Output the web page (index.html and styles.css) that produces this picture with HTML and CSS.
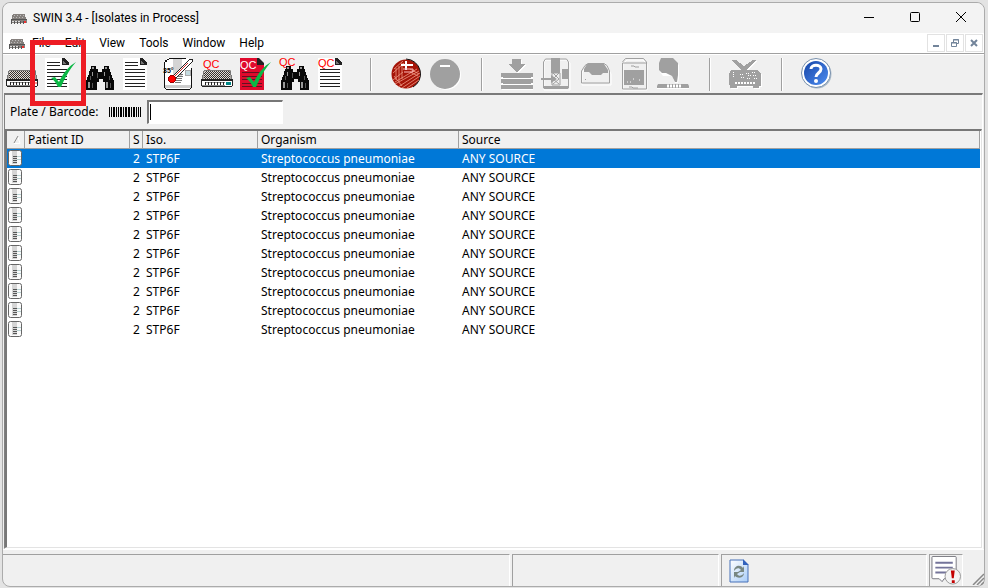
FILE: index.html
```html
<!DOCTYPE html>
<html lang="en">
<head>
<meta charset="utf-8">
<title>SWIN 3.4 - [Isolates in Process]</title>
<link rel="stylesheet" href="styles.css">
</head>
<body>
<svg class="defs" aria-hidden="true">
  <defs>
    <pattern id="mesh" width="4" height="2" patternUnits="userSpaceOnUse"><rect width="4" height="2" fill="#e0dcd8"/><path d="M0 0h1v1H0zM2 0h1v1H2zM1 1h1v1H1zM3 1h1v1H3z" fill="#33302e"/></pattern>
    <linearGradient id="blue" x1="0" y1="0" x2="1" y2="1"><stop offset="0" stop-color="#1746a8"/><stop offset="1" stop-color="#4d8df0"/></linearGradient>
    <linearGradient id="sheet" x1="0" y1="0" x2="1" y2="1"><stop offset="0" stop-color="#fff"/><stop offset="1" stop-color="#a9cdf8"/></linearGradient>
  </defs>
  <symbol id="plate" viewBox="0 0 32 32" shape-rendering="crispEdges">
    <path d="M3 12h26l1 1v8h2v6l-1 2H1l-1-2v-6h2v-8z" fill="#a8a4a0"/>
    <path d="M4 13h24v1h1v7H3v-7h1z" fill="url(#mesh)"/>
    <path d="M3 12h26v1H3zM2 13h1v4H2zM1 17h1v4H1zM29 13h1v4h-1zM30 17h1v4h-1z" fill="#777"/>
    <path d="M0 21h32v2H0zM0 23h1v5H0zM31 23h1v5h-1zM1 28h30v1H1z" fill="#222"/>
    <path d="M1 23h30v5H1z" fill="#fff"/>
    <path d="M5 24h19v1H5zM1 27h23v1H1z" fill="#888"/>
    <path d="M4 24h1v3H4zM7 24h1v3H7zM10 24h1v3h-1zM13 24h1v3h-1zM16 24h1v3h-1zM19 24h1v3h-1zM22 24h1v3h-1z" fill="#222"/>
  </symbol>
  <symbol id="miniplate" viewBox="0 0 16 10" shape-rendering="crispEdges">
    <path d="M2 0h12l1 5h1v4H0V5h1V1z" fill="#85807d"/>
    <path d="M3 1h1v1H3zM6 1h1v1H6zM9 1h1v1H9zM12 1h1v1h-1zM2 3h1v1H2zM5 3h1v1H5zM8 3h1v1H8zM11 3h1v1h-1z" fill="#bbb"/>
    <path d="M0 5h16v1H0zM0 6h1v4H0zM3 7h1v3H3zM6 7h1v3H6zM9 7h1v3H9zM12 7h1v3h-1z" fill="#555"/>
    <path d="M1 7h2v1H1zM4 7h2v1H4zM7 7h2v1H7z" fill="#ddd"/><path d="M13 7h2v2h-2z" fill="#e33"/>
  </symbol>
  <symbol id="doc" viewBox="0 0 32 32" shape-rendering="crispEdges">
    <path d="M0 0h17l7 6v26H0z" fill="#fff"/>
    <path d="M17 0h2l5 5v2h-7z" fill="#222"/><path d="M18 3l4 3h-4z" fill="#777"/>
    <path d="M2 4h13v1H2zM2 7h13v1H2zM2 11h20v1H2zM2 14h20v1H2zM2 18h20v1H2zM2 21h20v1H2zM2 25h20v1H2zM2 28h20v1H2z" fill="#222"/>
  </symbol>
  <symbol id="tick" viewBox="0 0 32 32"><path d="M6 20l4-1 4 5C18 15 24 8 31 4 24 12 20 20 16 29h-3C11 25 9 22 6 20z" fill="#0bb845"/></symbol>
  <symbol id="bino" viewBox="0 0 32 32" shape-rendering="crispEdges">
    <path d="M7 8h5v3h2v3h4v-3h2V8h5v3h1l1 5 3 7v9h-9v-8h-2v-3h-4v3h-2v8H2v-9l3-7 1-5h1z" fill="#080808"/>
    <path d="M8 9h2v2H8zM21 9h2v2h-2zM8 14h1v4H8zM20 14h1v4h-1zM4 24h2v6H4zM22 24h2v6h-2z" fill="#999"/>
    <path d="M6 18h1v4H6zM13 15h1v5h-1zM25 18h1v4h-1zM26 25h1v5h-1zM8 25h1v5H8z" fill="#555"/>
  </symbol>
  <symbol id="thermo" viewBox="0 0 32 32" shape-rendering="crispEdges">
    <path d="M6 0h20l3 3v27l-1 2H4l-2-2V4l2-3z" fill="#fff"/>
    <path d="M7 0h17v1H7zM5 1h2v1H5zM3 2h2v2H3zM2 4h1v26H2zM29 10h1v20h-1zM4 31h24v1H4zM3 30h1v1H3zM28 30h1v1h-1z" fill="#111"/>
    <path d="M11 1h9v18h-9z" fill="#d4d4d4"/><path d="M3 27h26v3H3z" fill="#ccc"/>
    <path d="M15 16h6v1h-6zM15 18h6v1h-6zM13 20h7v1h-7zM13 22h7v1h-7zM13 24h6v1h-6z" fill="#777"/>
    <rect x="23" y="12" width="5" height="5" fill="#c4dbe0" stroke="#aaa"/>
    <path d="M11 18L28 1h2v3L14 20z" fill="#fff" stroke="#222"/><path d="M11 20L26 5" stroke="#c22"/>
    <circle cx="10" cy="21" r="3.500" fill="#f00" stroke="#900"/>
    <text x="1" y="15" class="deg">35°</text>
  </symbol>
  <symbol id="rowdoc" viewBox="0 0 14 16">
    <rect x=".5" y=".5" width="13" height="15" rx="2" fill="#fafafa" stroke="#666"/>
    <path d="M4 1h5v13H4z" fill="#d5d5d5"/><path d="M5 6h4v1H5zM5 8h4v1H5zM5 10h4v1H5zM5 12h4v1H5z" fill="#555"/><path d="M9 6h4v1H9zM9 9h4v1H9z" fill="#b9d3d3"/>
  </symbol>
</svg>

<div class="window">
  <header class="titlebar">
    <svg class="app-icon" viewBox="0 0 16 10"><use href="#miniplate"/></svg>
    <h1>SWIN 3.4 - [Isolates in Process]</h1>
    <div class="caption">
      <button aria-label="Minimize"><svg viewBox="0 0 12 12"><path d="M1 5.500h10" stroke="#000"/></svg></button>
      <button aria-label="Maximize"><svg viewBox="0 0 12 12"><rect x="1.500" y=".5" width="9" height="9" rx="1" fill="none" stroke="#000"/></svg></button>
      <button aria-label="Close"><svg viewBox="0 0 12 12"><path d="M1 0l10 10M11 0L1 10" stroke="#000"/></svg></button>
    </div>
  </header>

  <nav class="menubar">
    <svg class="app-icon" viewBox="0 0 16 10"><use href="#miniplate"/></svg>
    <button>File</button><button>Edit</button><button>View</button><button>Tools</button><button>Window</button><button>Help</button>
    <div class="mdi-buttons">
      <button aria-label="Minimize document"><svg viewBox="0 0 10 10"><path d="M2 7h6v2H2z" fill="#72849a"/></svg></button>
      <button aria-label="Restore document"><svg viewBox="0 0 10 10"><path d="M3.500 4V1.500h5v4H7M3 2h6M1.500 4.500h5v4h-5zM1 5h6" fill="none" stroke="#72849a"/></svg></button>
      <button aria-label="Close document"><svg viewBox="0 0 10 10"><path d="M2 2l6 6M8 2L2 8" stroke="#72849a" stroke-width="2"/></svg></button>
    </div>
  </nav>

  <div class="toolbar" role="toolbar">
    <button aria-label="Plates"><svg viewBox="0 0 32 32"><use href="#plate"/><path d="M24 24h6v3h-6z" fill="#fff"/><path d="M26 24h5v2h-5z" fill="#f99"/></svg></button>
    <button aria-label="Isolates in process"><svg viewBox="0 0 32 32"><use href="#doc"/><use href="#tick"/></svg></button>
    <button aria-label="Find isolate"><svg viewBox="0 0 32 32"><use href="#bino"/></svg></button>
    <button aria-label="Report"><svg viewBox="0 0 32 32"><use href="#doc"/></svg></button>
    <button aria-label="Incubator"><svg viewBox="0 0 32 32"><use href="#thermo"/></svg></button>
    <button aria-label="QC plates"><svg viewBox="0 0 32 32"><use href="#plate"/><path d="M25 24h5v3h-5z" fill="#088"/><text x="2" y="10" class="qc">QC</text></svg></button>
    <button aria-label="QC in process"><svg viewBox="0 0 32 32"><path d="M0 0h17l7 6v26H0z" fill="#e00a2d"/><path d="M17 0h2l5 5v2h-7z" fill="#222"/><path d="M2 14.500h20M2 18.500h20M2 21.500h20M2 25.500h20M2 28.500h20" stroke="#641020"/><text x="0" y="11" class="qc qc-light">QC</text><use href="#tick"/></svg></button>
    <button aria-label="Find QC"><svg viewBox="0 0 32 32"><use href="#bino"/><text x="0" y="8" class="qc">QC</text></svg></button>
    <button aria-label="QC report"><svg viewBox="0 0 32 32"><use href="#doc"/><path d="M0 0h16v10H0z" fill="#fff"/><text x="0" y="9" class="qc">QC</text></svg></button>
    <span class="sep"></span>
    <button aria-label="Add organism"><svg viewBox="0 0 32 32"><circle cx="16" cy="16" r="14.500" fill="#a51408"/><path d="M16 1a15 15 0 0 1 7 28" fill="none" stroke="#111" stroke-width="1"/><path d="M4 11l9-8M3 15l11-10M9 8v15M6 10v12M12 5v16M3 22l10-8M5 26l24-13M8 29l22-14M12 30l18-12M5 24l22-13M17 30l12-8M20 11l9 5M20 14l8 4M4 18l8 10" stroke="#f09a86" stroke-width=".8"/><path d="M16 3v9M11 7h12" stroke="#fff" stroke-width="2"/><path d="M13 11h10v3h-9" fill="none" stroke="#fbb"/></svg></button>
    <button aria-label="Remove organism" disabled><svg viewBox="0 0 32 32"><circle cx="17" cy="17" r="15" fill="#fff"/><circle cx="16" cy="16" r="15" fill="#a0a0a0"/><path d="M11 7h10v2H11z" fill="#fff"/></svg></button>
    <span class="sep"></span>
    <button aria-label="Load plates" disabled><svg viewBox="0 0 32 32" shape-rendering="crispEdges"><path d="M12 1h8v5h5l-9 8-9-8h5zM1 15h30v4h-1v2H2v-2H0v-4zM1 21h30v4h-1v2H2v-2H0v-4zM1 27h30v4H0v-4z" fill="#fff" transform="translate(1 1)"/><path d="M11 1h9v5h5l-9 8-9-8h4zM0 15h32v4h-2v1H2v-1H0zM0 21h32v4h-2v1H2v-1H0zM0 27h32v4H0z" fill="#a0a0a0"/><path d="M0 20h32v1H0zM0 26h32v1H0z" fill="#fff"/></svg></button>
    <button aria-label="Inoculator" disabled><svg viewBox="-1 0 32 32"><path d="M5 2h21l3 3v27H3V4z" fill="none" stroke="#fff"/><path d="M4.500 1h21l2 3v26h-25V4z" fill="none" stroke="#a0a0a0"/><path d="M10 0h9v15h-9zM21 11h7v10h-7zM0 20h10v-3l6 4-6 4v-3H0zM3 28h24v3H3z" fill="#a0a0a0"/><path d="M11 15h8v12h-8zM12 15l6 6M18 15l-6 6 6 5M18 21l-6 5" fill="none" stroke="#a0a0a0"/></svg></button>
    <button aria-label="Reader" disabled><svg viewBox="-1 0 32 32"><path d="M2 15L8 6h18l5 10v11H2z" fill="none" stroke="#fff"/><path d="M1.500 13L5 7.500l3-2h16l3 2 2.500 5.500v12h-28z" fill="none" stroke="#a0a0a0"/><path d="M7 6h17l4 6v3h-5l-2 2h-9l-3-3H4v-3z" fill="#a0a0a0"/><path d="M5 21.500h1" stroke="#a0a0a0"/></svg></button>
    <button aria-label="Incubator unit" disabled><svg viewBox="-1 0 32 32"><path d="M4 6l4-4h16l4 4v26H4z" fill="none" stroke="#fff"/><path d="M3.500 4l3-3.500h18l3 3.500v27h-24V5h24" fill="none" stroke="#a0a0a0"/><path d="M5 12h20v15H5z" fill="#a0a0a0"/><path d="M12 8h3l1 1h4M10 29h3l1 1h5" stroke="#a0a0a0" fill="none"/><path d="M8 24h1M11 24h1M14 21h1M20 22h1" stroke="#fff"/></svg></button>
    <button aria-label="Unload plates" disabled><svg viewBox="0 0 32 32"><path d="M5 1h9l8 6v13l-1 5h-3l-3-7H6l-3-4z" fill="#fff"/><path d="M4 0h12l5 5v12l-1 7h-2l-3-6-6-3H5l-3-3V5z" fill="#a0a0a0"/><path d="M1 26h30l1 2v2H0v-2z" fill="#a0a0a0"/><path d="M10 28h14" stroke="#fff" stroke-width="3" stroke-dasharray="2 1"/><path d="M0 30.500h32" stroke="#fff"/></svg></button>
    <span class="sep"></span>
    <button aria-label="Instrument" disabled><svg viewBox="0 0 32 32" shape-rendering="crispEdges"><path d="M3 2h4l8 6 9-6h3l-9 10h11l3 4v12h-2v2h-6v-2H8v2H1v-3H0V16l2-4h10z" fill="#fff" transform="translate(1 1)"/><path d="M2 2h5l8 6 9-6h3l-9 10h11l3 4v12h-2v2h-6v-2H8v2H1v-3H0V16l2-4h10z" fill="#a0a0a0"/><path d="M4 14v6M11 16h3M12 19h3M17 15h3M19 17h3M23 14h4M24 17h4M18 20h4M25 20h3" stroke="#fff" stroke-dasharray="1 1"/><path d="M6 25h20" stroke="#fff" stroke-width="2" stroke-dasharray="2 1"/></svg></button>
    <span class="sep"></span>
    <button aria-label="Help"><svg viewBox="0 0 32 32"><circle cx="16" cy="16" r="14.500" fill="#a9b9c8"/><circle cx="15" cy="15" r="14.500" fill="#fff" stroke="#7890ac"/><circle cx="15" cy="15" r="12" fill="url(#blue)"/><path d="M10 11c0-5 10-5 10 0 0 4-5 4-5 8" fill="none" stroke="#fff" stroke-width="3"/><circle cx="15" cy="23" r="2" fill="#fff"/></svg></button>
  </div>

  <main class="document">
    <form class="scan">
      <label for="barcode">Plate / Barcode:</label>
      <svg class="bars" viewBox="0 0 32 10" shape-rendering="crispEdges"><path d="M0 0h1v10H0zM2 0h1v10H2zM4 0h2v10H4zM7 0h1v10H7zM9 0h1v10H9zM11 0h2v10h-2zM14 0h1v10h-1zM16 0h2v10h-2zM19 0h2v10h-2zM22 0h1v10h-1zM24 0h2v10h-2zM27 0h1v10h-1zM29 0h1v10h-1zM31 0h1v10h-1z"/></svg>
      <span class="field"><input id="barcode" type="text"><i class="caret"></i></span>
    </form>
    <div class="list">
      <table>
        <colgroup><col class="c-icon"><col class="c-patient"><col class="c-s"><col class="c-iso"><col class="c-org"><col></colgroup>
        <thead><tr><th aria-label="Sort"><svg class="sort" viewBox="0 0 8 8"><path d="M1 7.500h6L5 1" fill="none" stroke="#fff"/><path d="M1 7l4-7" stroke="#888"/></svg></th><th>Patient ID</th><th>S</th><th>Iso.</th><th>Organism</th><th>Source</th></tr></thead>
        <tbody>
          <tr class="selected"><td><svg class="rowicon"><use href="#rowdoc"/></svg></td><td></td><td>2</td><td>STP6F</td><td>Streptococcus pneumoniae</td><td>ANY SOURCE</td></tr>
          <tr><td><svg class="rowicon"><use href="#rowdoc"/></svg></td><td></td><td>2</td><td>STP6F</td><td>Streptococcus pneumoniae</td><td>ANY SOURCE</td></tr>
          <tr><td><svg class="rowicon"><use href="#rowdoc"/></svg></td><td></td><td>2</td><td>STP6F</td><td>Streptococcus pneumoniae</td><td>ANY SOURCE</td></tr>
          <tr><td><svg class="rowicon"><use href="#rowdoc"/></svg></td><td></td><td>2</td><td>STP6F</td><td>Streptococcus pneumoniae</td><td>ANY SOURCE</td></tr>
          <tr><td><svg class="rowicon"><use href="#rowdoc"/></svg></td><td></td><td>2</td><td>STP6F</td><td>Streptococcus pneumoniae</td><td>ANY SOURCE</td></tr>
          <tr><td><svg class="rowicon"><use href="#rowdoc"/></svg></td><td></td><td>2</td><td>STP6F</td><td>Streptococcus pneumoniae</td><td>ANY SOURCE</td></tr>
          <tr><td><svg class="rowicon"><use href="#rowdoc"/></svg></td><td></td><td>2</td><td>STP6F</td><td>Streptococcus pneumoniae</td><td>ANY SOURCE</td></tr>
          <tr><td><svg class="rowicon"><use href="#rowdoc"/></svg></td><td></td><td>2</td><td>STP6F</td><td>Streptococcus pneumoniae</td><td>ANY SOURCE</td></tr>
          <tr><td><svg class="rowicon"><use href="#rowdoc"/></svg></td><td></td><td>2</td><td>STP6F</td><td>Streptococcus pneumoniae</td><td>ANY SOURCE</td></tr>
          <tr><td><svg class="rowicon"><use href="#rowdoc"/></svg></td><td></td><td>2</td><td>STP6F</td><td>Streptococcus pneumoniae</td><td>ANY SOURCE</td></tr>
        </tbody>
      </table>
    </div>
  </main>

  <footer class="status">
    <div class="pane wide"></div>
    <div class="pane medium"></div>
    <div class="pane medium"><svg class="sync" viewBox="0 0 20 24"><path d="M1 1h13l5 5v17H1z" fill="url(#sheet)" stroke="#4670b8"/><path d="M14 0v6h6z" fill="#3162bd"/><path d="M5 12c0-5 6-7 9-3l1-2v6H9l3-2c-2-3-5-2-7 1zM15 14c0 5-6 6-9 3l-1 2v-6h6l-3 2c2 3 5 2 7-1z" fill="#788782"/></svg></div>
    <div class="pane small"><svg class="alert" viewBox="0 0 32 32"><path d="M1.500 2.500q0-1 1-1h23q1 0 1 1v21q0 1-1 1H14l-2 3-3-3H2.500q-1 0-1-1z" fill="#fff" stroke="#77777f"/><path d="M5 8h18M5 13h18M5 18h11" stroke="#74749a" stroke-width="2"/><circle cx="23" cy="22" r="8" fill="#f4f4f4" stroke="#999"/><path d="M21 16h4l-1 8h-2zM22 26h3v3h-3z" fill="#c40000"/></svg></div>
    <svg class="grip" viewBox="0 0 12 12"><path d="M1 12L12 1M5 12l7-7M9 12l3-3" stroke="#888" stroke-width="1.500"/></svg>
  </footer>
  <div class="highlight"></div>
</div>
</body>
</html>
```
FILE: styles.css
```css
* { box-sizing: border-box; }
body {
  margin: 0;
  padding: 2px 3px 1px 2px;
  height: 100vh;
  background: #e3e3e3;
  color: #000;
  font: 12px/16px "Noto Sans", "DejaVu Sans", sans-serif;
}
button { border: 0; padding: 0; background: none; font: inherit; color: inherit; }
svg { display: block; }
.defs { position: absolute; width: 0; height: 0; }
.window {
  position: relative;
  display: flex;
  flex-direction: column;
  height: 100%;
  border: 1px solid #ababab;
  border-radius: 8px;
  background: #f0f0f0;
}
.titlebar, .menubar {
  display: flex;
  align-items: center;
  padding-left: 8px;
  font-family: Roboto, "Open Sans", sans-serif;
}
.titlebar { height: 30px; background: #f3f3f3; border-radius: 8px 8px 0 0; }
.titlebar h1 { margin: 0 0 0 6px; font-size: 12px; font-weight: 400; }
.app-icon { width: 16px; height: 10px; margin-top: 2px; }
.caption { display: flex; margin-left: auto; }
.caption button { width: 46px; height: 29px; display: grid; place-items: center; }
.caption svg { width: 12px; height: 12px; }
.menubar { height: 20px; background: #fff; padding-left: 6px; }
.menubar > button { padding: 0 7px; }
.mdi-buttons { display: flex; gap: 1px; margin-left: auto; padding-right: 1px; }
.mdi-buttons button {
  display: grid;
  place-items: center;
  width: 18px;
  height: 18px;
  border: 1px solid #e2e2e2;
}
.mdi-buttons svg { width: 10px; height: 10px; }
.toolbar {
  display: flex;
  gap: 7px;
  height: 40px;
  padding: 4px 3px 2px;
  border-top: 1px solid #a0a0a0;
  box-shadow: inset 0 1px #fff;
}
.toolbar button { width: 32px; height: 32px; flex: none; }
.toolbar svg { width: 32px; height: 32px; overflow: visible; }
.sep { width: 2px; height: 33px; margin: 0 11px 0 13px; background: #a0a0a0; border-right: 1px solid #fff; }
.qc { font: 11px "Liberation Sans", sans-serif; fill: #f00; }
.qc-light { fill: #fff; }
.deg { font: bold 7px "Liberation Sans", sans-serif; }
.document {
  flex: 1;
  display: flex;
  flex-direction: column;
  margin: 0 1px;
  border: 1px solid #808080;
  border-top: 2px solid #7a7a7a;
  border-right-color: #fff;
  border-bottom-color: #fff;
}
.scan { display: flex; align-items: center; height: 34px; padding-left: 5px; }
.scan label { width: 99px; white-space: nowrap; }
.bars { width: 32px; height: 10px; }
.field { position: relative; margin-left: 6px; }
.field input {
  display: block;
  width: 136px;
  height: 24px;
  padding: 2px;
  border: 1px solid #fff;
  border-top: 2px solid #777;
  border-left: 2px solid #777;
  background: #fff;
  font: inherit;
  outline: 0;
}
.caret { position: absolute; left: 3px; top: 4px; width: 1px; height: 16px; background: #000; }
.list {
  flex: 1;
  background: #fff;
  padding-right: 1px;
  border-top: 2px solid #777;
  border-left: 2px solid #777;
  border-right: 1px solid #e3e3e3;
  border-bottom: 1px solid #e3e3e3;
}
table { width: 100%; table-layout: fixed; border-collapse: separate; border-spacing: 0; }
.c-icon { width: 18px; }
.c-patient { width: 105px; }
.c-s { width: 13px; }
.c-iso { width: 115px; }
.c-org { width: 201px; }
th, td { height: 19px; padding: 0 0 0 3px; text-align: left; font-weight: 400; white-space: nowrap; line-height: 18px; }
th { height: 18px; background: #f0f0f0; border-right: 1px solid #a0a0a0; border-bottom: 1px solid #a0a0a0; line-height: 17px; }
td:first-child { padding: 1px 0 0 1px; vertical-align: top; }
.selected { background: #0078d7; color: #fff; }
.rowicon { width: 14px; height: 16px; }
.sort { width: 8px; height: 8px; margin-left: 3px; }
.status { display: flex; gap: 2px; height: 37px; padding-top: 4px; border-top: 1px solid #fff; }
.pane { min-width: 0; border-top: 1px solid #a0a0a0; border-left: 1px solid #a0a0a0; border-right: 1px solid #fff; }
.wide { flex: 510; border-left: 0; }
.medium { flex: 206; }
.small { width: 34px; }
.sync { width: 20px; height: 24px; margin: 4px 0 0 7px; }
.alert { width: 32px; height: 31px; }
.grip { width: 12px; height: 12px; margin: auto 0 1px 7px; }
.highlight {
  position: absolute;
  left: 27px;
  top: 37px;
  width: 56px;
  height: 66px;
  border: 5px solid #ed1c24;
  pointer-events: none;
}
```
